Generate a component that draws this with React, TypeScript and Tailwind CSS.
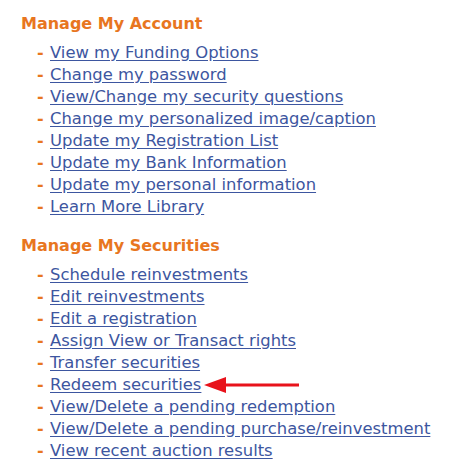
const account = [
  "View my Funding Options",
  "Change my password",
  "View/Change my security questions",
  "Change my personalized image/caption",
  "Update my Registration List",
  "Update my Bank Information",
  "Update my personal information",
  "Learn More Library",
];

const securities = [
  "Schedule reinvestments",
  "Edit reinvestments",
  "Edit a registration",
  "Assign View or Transact rights",
  "Transfer securities",
  "Redeem securities",
  "View/Delete a pending redemption",
  "View/Delete a pending purchase/reinvestment",
  "View recent auction results",
];

const Arrow = () => (
  <svg width="96" height="18" viewBox="0 0 96 18" className="ml-[3px]">
    <polygon points="0,9 22,1 22,17" fill="#e8131b" />
    <rect x="20" y="7.5" width="75" height="3" fill="#e8131b" />
  </svg>
);

const Section = ({ title, items }: { title: string; items: string[] }) => (
  <div>
    <h2 className="text-[16px] font-bold text-[#e8761f] leading-[22px]">{title}</h2>
    <ul className="mt-[7px] pl-4">
      {items.map((item) => (
        <li key={item} className="flex items-center h-[22px]">
          <span className="text-[#e8761f] font-bold w-[13px]">-</span>
          <a href="#" className="text-[#3d56a0] text-[16.4px] underline underline-offset-2">
            {item}
          </a>
          {item === "Redeem securities" && <Arrow />}
        </li>
      ))}
    </ul>
  </div>
);

export default function App() {
  return (
    <div className="w-[454px] h-[472px] bg-white pl-[21px] pt-[13px] font-['DejaVu_Sans',Verdana,sans-serif] text-[16px]">
      <Section title="Manage My Account" items={account} />
      <div className="mt-[17px]">
        <Section title="Manage My Securities" items={securities} />
      </div>
    </div>
  );
}
